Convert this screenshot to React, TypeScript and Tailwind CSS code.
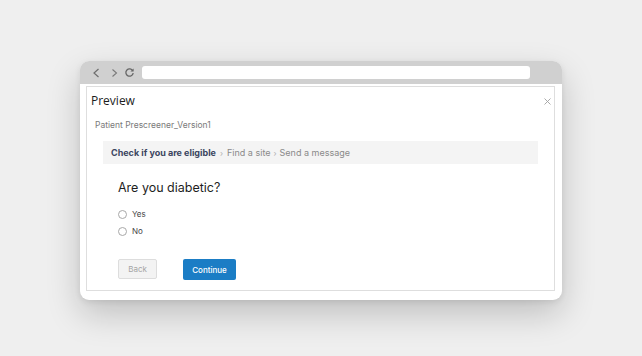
import React from "react";

export default function App() {
  return (
    <div className="w-[642px] h-[356px] bg-[#efefef] pt-[61px] pl-[80px] overflow-hidden" style={{ fontFamily: "Inter, 'Open Sans', sans-serif" }}>
      <div className="w-[482px] h-[239px] rounded-[9px] bg-white overflow-hidden flex flex-col shadow-[0_14px_34px_rgba(0,0,0,0.2),0_2px_6px_rgba(0,0,0,0.08)]">
        {/* toolbar */}
        <div className="h-[23px] bg-[#d0d0d0] flex items-center pl-[12px] pr-[32px] shrink-0">
          <svg width="9" height="10" viewBox="0 0 9 10" className="mr-[9px]">
            <path d="M6.5 1 L2 5 L6.5 9" fill="none" stroke="#6e6e6e" strokeWidth="1.2" />
          </svg>
          <svg width="9" height="10" viewBox="0 0 9 10" className="mr-[5px]">
            <path d="M2.5 1.5 L6.5 5 L2.5 8.5" fill="none" stroke="#7a7a7a" strokeWidth="1.1" />
          </svg>
          <svg width="11" height="11" viewBox="0 0 12 12" className="mr-[7px]">
            <path d="M9.6 4.2 A4 4 0 1 0 10 6.5" fill="none" stroke="#666" strokeWidth="1.4" />
            <path d="M10.5 1.5 L10.5 5 L7 5 Z" fill="#666" />
          </svg>
          <div className="flex-1 h-[13px] bg-white rounded-[3px]" />
        </div>
        {/* content */}
        <div className="flex-1 pt-[2px] pl-[6px] pr-[7px] pb-[9px] flex">
          <div className="flex-1 border border-[#dedede] flex flex-col">
            <div className="flex items-center justify-between h-[24px] pl-[4px] pr-[2px] mt-[2px]">
              <span className="text-[12px] text-[#1c1c1c]" style={{ fontFamily: "'Open Sans', sans-serif" }}>Preview</span>
              <svg width="7" height="7" viewBox="0 0 7 7" className="mr-[1px]">
                <path d="M0.5 0.5 L6.5 6.5 M6.5 0.5 L0.5 6.5" stroke="#a0a0a0" strokeWidth="0.9" />
              </svg>
            </div>
            <div className="pl-[8px] mt-[6px] text-[8.5px] text-[#7a7a7a] leading-[12px]">Patient Prescreener_Version1</div>
            <div className="mx-[16px] mt-[10px] h-[23px] bg-[#f4f4f4] flex items-center pl-[8px] text-[9px]">
              <span className="font-bold text-[#3b4560]">Check if you are eligible</span>
              <span className="mx-[4px] text-[#b0b0b0] text-[8px]">›</span>
              <span className="text-[#8a8a8a]">Find a site</span>
              <span className="mx-[3px] text-[#b0b0b0] text-[8px]">›</span>
              <span className="text-[#8a8a8a]">Send a message</span>
            </div>
            <div className="pl-[31px] mt-[15px] text-[12.5px] text-[#1e1e1e] leading-[17px]">Are you diabetic?</div>
            <div className="pl-[31px] mt-[13px] flex flex-col gap-[7px]">
              <label className="flex items-center gap-[5px] text-[8px] text-[#444] leading-[10px]">
                <span className="w-[9px] h-[9px] rounded-full border border-[#a8a8a8] bg-white" />
                Yes
              </label>
              <label className="flex items-center gap-[5px] text-[8px] text-[#444] leading-[10px]">
                <span className="w-[9px] h-[9px] rounded-full border border-[#a8a8a8] bg-white" />
                No
              </label>
            </div>
            <div className="pl-[31px] mt-[23px] flex gap-[26px]">
              <div className="w-[39px] h-[20px] bg-[#f3f3f3] border border-[#dddddd] rounded-[2px] flex items-center justify-center text-[8px] text-[#a5a5a5]">Back</div>
              <div className="w-[53px] h-[21px] bg-[#1b7dc5] rounded-[2px] flex items-center justify-center text-[8px] text-white font-medium">Continue</div>
            </div>
          </div>
        </div>
      </div>
    </div>
  );
}
